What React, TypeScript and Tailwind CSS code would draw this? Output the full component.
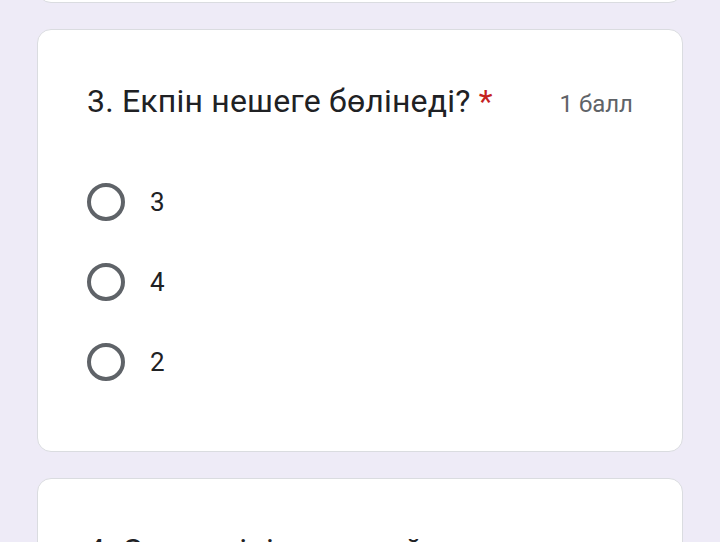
import React, { useState } from 'react';

type Question = {
  id: number;
  title: string;
  points: string;
  options: string[];
};

const question: Question = {
  id: 3,
  title: '3. Екпін нешеге бөлінеді?',
  points: '1 балл',
  options: ['3', '4', '2'],
};

const Radio: React.FC<{ checked: boolean }> = ({ checked }) => (
  <span className="flex h-[38px] w-[38px] shrink-0 items-center justify-center rounded-full border-[4px] border-[#5f6368]">
    {checked && <span className="h-[18px] w-[18px] rounded-full bg-[#5f6368]" />}
  </span>
);

const QuestionCard: React.FC<{ q: Question }> = ({ q }) => {
  const [selected, setSelected] = useState<string | null>(null);

  return (
    <div className="rounded-[14px] border border-[#dadce0] bg-white px-[49px] pt-[51px] pb-[49px]">
      <div className="flex items-baseline justify-between gap-4">
        <h2 className="text-[32px] leading-[40px] tracking-[0.2px] text-[#202124]">
          {q.title} <span className="text-[#c5221f]">*</span>
        </h2>
        <span className="shrink-0 text-[24px] text-[#5f6368]">{q.points}</span>
      </div>
      <div className="mt-[40px]">
        {q.options.map((opt) => (
          <label
            key={opt}
            className="flex h-[80px] cursor-pointer items-center gap-[25px]"
            onClick={() => setSelected(opt)}
          >
            <Radio checked={selected === opt} />
            <span className="text-[26px] text-[#202124]">{opt}</span>
          </label>
        ))}
      </div>
    </div>
  );
};

export default function App() {
  return (
    <div className="h-[542px] overflow-hidden bg-[#eeebf7] px-[37px] font-['Roboto','Liberation_Sans',sans-serif]">
      <div className="-mt-[38px] h-[41px] rounded-[14px] border border-[#dadce0] bg-white" />
      <div className="mt-[26px]">
        <QuestionCard q={question} />
      </div>
      <div className="mt-[26px] rounded-[14px] border border-[#dadce0] bg-white px-[49px] pt-[51px] pb-[49px]">
        <div className="flex items-baseline justify-between gap-4">
          <h2 className="text-[32px] leading-[40px] tracking-[0.2px] text-[#202124]">
            4. Сөз екпіні және қай сөзге түседі? <span className="text-[#c5221f]">*</span>
          </h2>
          <span className="shrink-0 text-[24px] text-[#5f6368]">1 балл</span>
        </div>
      </div>
    </div>
  );
}
